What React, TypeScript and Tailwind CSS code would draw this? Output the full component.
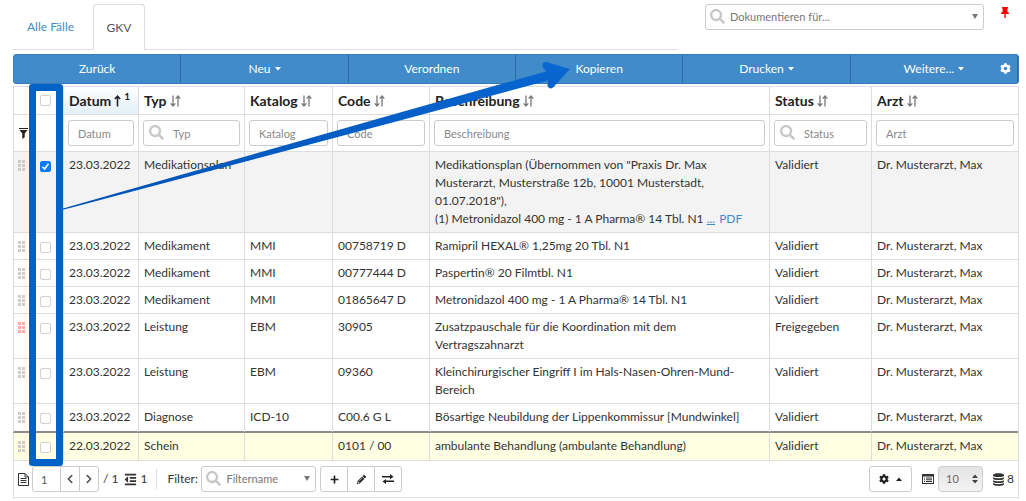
import React from 'react';
import { FaCog, FaSearch, FaChevronLeft, FaChevronRight, FaPlus, FaPencilAlt, FaOutdent } from 'react-icons/fa';

interface Entry {
  date: string;
  type: string;
  catalog?: string;
  code?: string;
  description: React.ReactNode;
  status: string;
  checked?: boolean;
  handle?: string;
  row?: string;
  cell?: string;
}

const entries: Entry[] = [
  {
    date: '23.03.2022',
    type: 'Medikationsplan',
    description: (
      <>
        Medikationsplan (Übernommen von "Praxis Dr. Max
        <br />
        Musterarzt, Musterstraße 12b, 10001 Musterstadt,
        <br />
        01.07.2018"),
        <br />
        (1) Metronidazol 400 mg - 1 A Pharma® 14 Tbl. N1{' '}
        <a href="#mehr" className="text-[#428bca] underline">...</a>
        <a href="#pdf" className="ml-1 text-[#428bca]">PDF</a>
      </>
    ),
    status: 'Validiert',
    checked: true,
    row: 'bg-[#f3f3f3]',
  },
  { date: '23.03.2022', type: 'Medikament', catalog: 'MMI', code: '00758719 D', description: 'Ramipril HEXAL® 1,25mg 20 Tbl. N1', status: 'Validiert' },
  { date: '23.03.2022', type: 'Medikament', catalog: 'MMI', code: '00777444 D', description: 'Paspertin® 20 Filmtbl. N1', status: 'Validiert' },
  { date: '23.03.2022', type: 'Medikament', catalog: 'MMI', code: '01865647 D', description: 'Metronidazol 400 mg - 1 A Pharma® 14 Tbl. N1', status: 'Validiert' },
  {
    date: '23.03.2022',
    type: 'Leistung',
    catalog: 'EBM',
    code: '30905',
    description: <>Zusatzpauschale für die Koordination mit dem<br />Vertragszahnarzt</>,
    status: 'Freigegeben',
    handle: 'text-[#ffa8a8]',
  },
  {
    date: '23.03.2022',
    type: 'Leistung',
    catalog: 'EBM',
    code: '09360',
    description: <>Kleinchirurgischer Eingriff I im Hals-Nasen-Ohren-Mund-<br />Bereich</>,
    status: 'Validiert',
  },
  {
    date: '23.03.2022',
    type: 'Diagnose',
    catalog: 'ICD-10',
    code: 'C00.6 G L',
    description: 'Bösartige Neubildung der Lippenkommissur [Mundwinkel]',
    status: 'Validiert',
    row: 'h-[29px]',
    cell: 'border-b-2 border-b-[#8c8c8c]',
  },
  {
    date: '22.03.2022',
    type: 'Schein',
    code: '0101 / 00',
    description: 'ambulante Behandlung (ambulante Behandlung)',
    status: 'Validiert',
    row: 'h-7 bg-[#ffffe3]',
  },
];

const columns = [
  { label: 'Datum', sorted: true },
  { label: 'Typ', search: true },
  { label: 'Katalog' },
  { label: 'Code' },
  { label: 'Beschreibung' },
  { label: 'Status', search: true },
  { label: 'Arzt' },
];

const actions = [
  { label: 'Zurück' },
  { label: 'Neu', menu: true },
  { label: 'Verordnen' },
  { label: 'Kopieren' },
  { label: 'Drucken', menu: true },
  { label: 'Weitere...', menu: true },
];

const SortIcon = () => (
  <svg width="11" height="12" viewBox="0 0 11 12" fill="none" stroke="#777" strokeWidth="1.3" className="shrink-0">
    <path d="M3 0.5V11M0.7 8.4L3 11L5.3 8.4" />
    <path d="M8 11.5V1M5.7 3.6L8 1L10.3 3.6" />
  </svg>
);

const SortUpIcon = () => (
  <svg width="7" height="12" viewBox="0 0 7 12" fill="none" stroke="#222" strokeWidth="1.6" className="shrink-0">
    <path d="M3.5 11.5V1.2M0.8 4L3.5 1.2L6.2 4" />
  </svg>
);

const Caret = ({ up }: { up?: boolean }) => (
  <svg width="6" height="4" viewBox="0 0 6 4" fill="currentColor">
    {up ? <path d="M0 4L3 0.5L6 4Z" /> : <path d="M0 0L3 3.5L6 0Z" />}
  </svg>
);

const DragHandle = ({ className }: { className: string }) => (
  <svg width="7" height="11" viewBox="0 0 7 11" fill="currentColor" className={className}>
    {[0, 4, 8].map((y) => (
      <React.Fragment key={y}>
        <rect x="0" y={y} width="3" height="3" />
        <rect x="4" y={y} width="3" height="3" />
      </React.Fragment>
    ))}
  </svg>
);

const PinIcon = () => (
  <svg width="8" height="11" viewBox="0 0 8 11" fill="#f00">
    <path d="M1 0H7V1.6H6.4V4.8C7.5 5.1 8 5.900 8 7H4.700V11H3.300V7H0C0 5.900 0.500 5.100 1.600 4.800V1.600H1Z" />
  </svg>
);

const FilterIcon = () => (
  <svg width="9" height="11" viewBox="0 0 9 11" fill="#222">
    <path d="M0 0H9V1H0ZM0.500 2H8.500L5.700 5.600V9.200L3.300 11V5.600Z" />
  </svg>
);

const DocumentIcon = () => (
  <svg width="11" height="13" viewBox="0 0 11 13" fill="none" stroke="#333" className="shrink-0">
    <path d="M0.500 0.500H7L10.500 4V12.500H0.500ZM7 0.500V4H10.500M2.500 5.500H8.500M2.500 7.500H8.500M2.500 9.500H8.500" />
  </svg>
);

const SwapIcon = () => (
  <svg width="12" height="10" viewBox="0 0 12 10" fill="#222">
    <path d="M0 2H8V0L11.500 2.700L8 5.200V3.400H0ZM12 6.600H4V4.900L0.500 7.400L4 10V8H12Z" />
  </svg>
);

const ListIcon = () => (
  <svg width="12" height="10" viewBox="0 0 12 10" fill="#333" className="shrink-0">
    <path fillRule="evenodd" d="M0 0H12V10H0ZM1 2.500V9H11V2.500Z" />
    <path d="M2 3.500H3V4.500H2ZM4 3.500H10V4.500H4ZM2 5.300H3V6.300H2ZM4 5.300H10V6.300H4ZM2 7.100H3V8.100H2ZM4 7.100H10V8.100H4Z" />
  </svg>
);

const DatabaseIcon = () => (
  <svg width="11" height="13" viewBox="0 0 11 13" fill="#333" className="shrink-0">
    <path d="M0 2C0 -0.500 11 -0.500 11 2V2.500C11 4.600 0 4.600 0 2.500Z" />
    <path d="M0 4.200C2 5.700 9 5.700 11 4.200V5.600C11 7.600 0 7.600 0 5.600Z" />
    <path d="M0 7.200C2 8.700 9 8.700 11 7.200V8.600C11 10.600 0 10.600 0 8.600Z" />
    <path d="M0 10.100C2 11.600 9 11.600 11 10.100V11.200C11 13.500 0 13.500 0 11.200Z" />
  </svg>
);

const Checkbox = ({ label, checked }: { label: string; checked?: boolean }) => (
  <span className="relative block h-3 w-3">
    <input
      type="checkbox"
      aria-label={label}
      defaultChecked={checked}
      className="peer block h-[11px] w-[11px] appearance-none rounded-[2px] border border-[#d0d0d0] bg-white checked:border-[#0a7cff] checked:bg-[#0a7cff]"
    />
    <svg width="11" height="11" viewBox="0 0 11 11" fill="none" stroke="#fff" strokeWidth="1.6" className="pointer-events-none absolute top-0 left-0 hidden peer-checked:block">
      <path d="M2.500 5.800L4.600 8L8.500 2.800" />
    </svg>
  </span>
);

const Combobox = ({ label, className }: { label: string; className: string }) => (
  <div className={`relative ${className}`}>
    <FaSearch size={15} className="pointer-events-none absolute top-[5px] left-[5px] text-[#c8c8c8]" />
    <select aria-label={label} className="block h-[26px] w-full appearance-none rounded-[3px] border border-[#ccc] bg-transparent pr-4 pl-6 text-[11px] text-[#777]">
      <option>{label}</option>
    </select>
    <svg width="6" height="5" viewBox="0 0 6 5" fill="#777" className="pointer-events-none absolute top-[10px] right-[6px]">
      <path d="M0 0H6L3 5Z" />
    </svg>
  </div>
);

const toolButton = 'flex h-[26px] w-7 items-center justify-center border border-[#ccc] bg-white text-[#222]';

const App: React.FC = () => {
  return (
    <div className="bg-white pr-[7px] pb-1 pl-[13px] font-['Lato',sans-serif] text-[12px] leading-[18px] text-[#333]">
      <header className="flex items-start pt-1 pr-[10px]">
        <nav className="flex h-[46px] flex-1 border-b border-[#ddd]">
          <a href="#alle" className="flex w-20 items-center pl-[14px] text-[#428bca]">Alle Fälle</a>
          <a href="#gkv" className="-mb-px flex h-[46px] w-[52px] items-center justify-center rounded-t border border-b-0 border-[#ddd] bg-white text-[#555]">GKV</a>
        </nav>
        <Combobox label="Dokumentieren für..." className="ml-[27px] w-[279px]" />
        <button type="button" aria-label="Anheften" className="mt-[3px] ml-[17px]"><PinIcon /></button>
      </header>

      <div className="relative mt-1">
        <div className="relative grid h-[30px] grid-cols-6 divide-x divide-[#2d6ca2] overflow-hidden rounded-[3px] border border-[#357ebd] bg-[#428bca] text-white">
          {actions.map((a) => (
            <button type="button" key={a.label} className="flex items-center justify-center gap-1">
              {a.label}
              {a.menu && <Caret />}
            </button>
          ))}
          <button type="button" aria-label="Einstellungen" className="absolute top-2 right-[7px]"><FaCog size={11} /></button>
        </div>

        <table className="mt-[2px] w-full table-fixed border-separate border-spacing-0 border-t border-r border-[#ddd]">
          <colgroup>
            <col className="w-4" />
            <col className="w-[34px]" />
            <col className="w-[75px]" />
            <col className="w-[106px]" />
            <col className="w-[88px]" />
            <col className="w-[97px]" />
            <col />
            <col className="w-[102px]" />
            <col className="w-[147px]" />
          </colgroup>
          <thead>
            <tr className="h-7">
              <th className="border-b border-l border-[#ddd]" />
              <th className="border-b border-[#ddd] pl-[11px]"><Checkbox label="Alle auswählen" /></th>
              {columns.map((c) => (
                <th key={c.label} className={`border-b border-l border-[#ddd] px-[5px] text-left text-[14px] font-bold text-[#222] ${c.sorted ? 'bg-linear-to-b from-white to-[#e3f0f9]' : ''}`}>
                  <span className="flex items-center gap-[3px] whitespace-nowrap">
                    {c.label}
                    {c.sorted ? <><SortUpIcon /><sup className="text-[10px]">1</sup></> : <SortIcon />}
                  </span>
                </th>
              ))}
            </tr>
            <tr className="h-[37px]">
              <td className="border-b border-l border-[#ddd] pl-[5px]"><FilterIcon /></td>
              <td className="border-b border-[#ddd]" />
              {columns.map((c) => (
                <td key={c.label} className="border-b border-l border-[#ddd] px-1">
                  <div className="relative">
                    {c.search && <FaSearch size={15} className="absolute top-[5px] left-[6px] text-[#c8c8c8]" />}
                    <input
                      type="text"
                      aria-label={c.label}
                      placeholder={c.label}
                      className={`block h-[26px] w-full rounded-[3px] border border-[#ccc] text-[11px] placeholder:text-[#888] ${c.search ? 'pl-[29px]' : 'pl-[9px]'}`}
                    />
                  </div>
                </td>
              ))}
            </tr>
          </thead>
          <tbody>
            {entries.map((e, i) => {
              const cell = `border-l border-[#ddd] px-[5px] py-1 ${e.cell ?? 'border-b'}`;
              return (
                <tr key={i} className={`align-top ${e.row ?? ''}`}>
                  <td className={`border-l border-[#ddd] pt-2 pl-1 ${e.cell ?? 'border-b'}`}>
                    <DragHandle className={e.handle ?? 'text-[#ccc]'} />
                  </td>
                  <td className={`border-[#ddd] pt-[9px] pl-[11px] ${e.cell ?? 'border-b'}`}>
                    <Checkbox label={`Zeile ${i + 1} auswählen`} checked={e.checked} />
                  </td>
                  <td className={cell}>{e.date}</td>
                  <td className={cell}>{e.type}</td>
                  <td className={cell}>{e.catalog}</td>
                  <td className={cell}>{e.code}</td>
                  <td className={cell}>{e.description}</td>
                  <td className={cell}>{e.status}</td>
                  <td className={cell}>Dr. Musterarzt, Max</td>
                </tr>
              );
            })}
          </tbody>
        </table>

        <footer className="flex h-[37px] items-center border-x border-b border-[#ddd] px-1">
          <DocumentIcon />
          <div className="ml-[3px] flex">
            <input type="text" aria-label="Seite" defaultValue="1" className="h-[26px] w-[29px] rounded-l-[3px] border border-[#ccc] pl-2 text-[11px] text-[#555]" />
            <button type="button" aria-label="Vorherige Seite" className="-ml-px flex h-[26px] w-5 items-center justify-center border border-[#ccc] text-[#555]"><FaChevronLeft size={10} /></button>
            <button type="button" aria-label="Nächste Seite" className="-ml-px flex h-[26px] w-5 items-center justify-center rounded-r-[3px] border border-[#ccc] text-[#555]"><FaChevronRight size={10} /></button>
          </div>
          <span className="ml-1">/ 1</span>
          <FaOutdent size={13} className="ml-[6px]" />
          <span className="ml-[3px]">1</span>
          <span className="ml-[9px] h-5 w-px bg-[#ddd]" />
          <span className="ml-[10px] w-[34px]">Filter:</span>
          <Combobox label="Filtername" className="w-[115px]" />
          <div className="ml-1 flex">
            <button type="button" aria-label="Filter hinzufügen" className={`${toolButton} rounded-l-[3px]`}><FaPlus size={9} /></button>
            <button type="button" aria-label="Filter bearbeiten" className={`${toolButton} -ml-px`}><FaPencilAlt size={9} /></button>
            <button type="button" aria-label="Filter wechseln" className={`${toolButton} -ml-px rounded-r-[3px]`}><SwapIcon /></button>
          </div>
          <button type="button" aria-label="Optionen" className="ml-auto flex h-[26px] w-[43px] items-center justify-center gap-[7px] rounded-[3px] border border-[#ccc] text-[#222]">
            <FaCog size={10} />
            <Caret up />
          </button>
          <span className="ml-[10px]"><ListIcon /></span>
          <div className="relative ml-1">
            <select aria-label="Zeilen pro Seite" className="block h-[26px] w-[45px] appearance-none rounded-[4px] border border-[#ccc] bg-linear-to-b from-[#e4e4e4] to-[#f3f3f3] pl-[7px] text-[11px] text-[#666]">
              <option>10</option>
            </select>
            <span className="pointer-events-none absolute top-2 right-[5px] flex flex-col gap-[2px] text-[#444]"><Caret up /><Caret /></span>
          </div>
          <span className="ml-[10px]"><DatabaseIcon /></span>
          <span className="ml-[3px]">8</span>
        </footer>

        {/* hint: the selection column leads to the copy button */}
        <div className="pointer-events-none absolute top-[30px] bottom-[32px] left-4 w-[34px] rounded-[3px] border-[7px] border-[#0061c6]" />
        <svg width="560" height="160" viewBox="0 0 560 160" className="pointer-events-none absolute top-0 left-0">
          <defs>
            <linearGradient id="arrow" x1="0" y1="0" x2="0.150" y2="1">
              <stop offset="0" stopColor="#0a6bd8" />
              <stop offset="1" stopColor="#0052b4" />
            </linearGradient>
          </defs>
          <path d="M50 154.500L387 58.500L533 17.500L530 13.500Q528 8 533 8L557 15L541 32.500Q538 36 535 33Q534 31 535 26.500L387 66.500L50 155.800Z" fill="url(#arrow)" />
        </svg>
      </div>
    </div>
  );
};

export default App;
